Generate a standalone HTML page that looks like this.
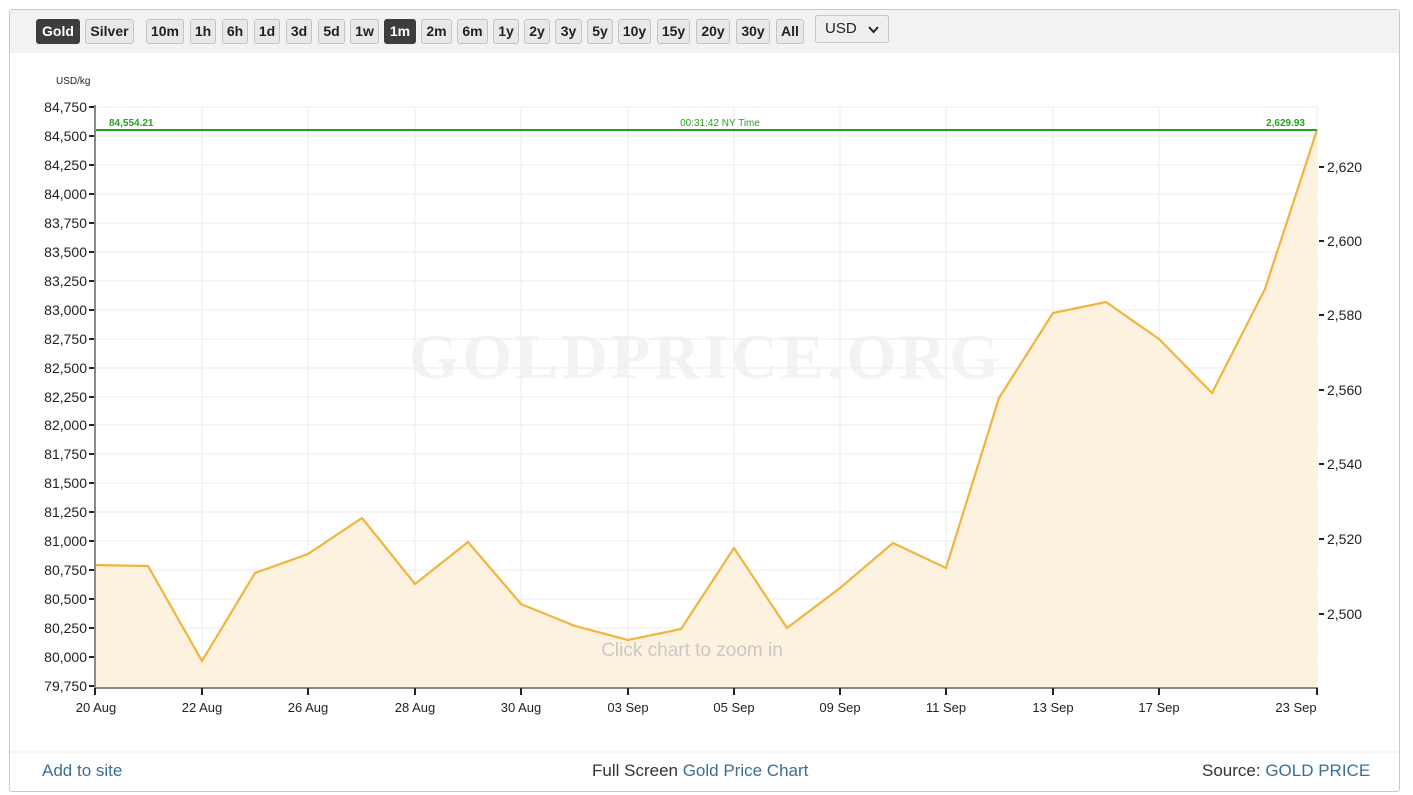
<!DOCTYPE html>
<html><head><meta charset="utf-8"><style>
body{margin:0;width:1413px;height:795px;background:#fff;font-family:"Liberation Sans",sans-serif;position:relative;overflow:hidden}
.box{position:absolute;left:9px;top:9px;width:1391px;height:783px;border:1px solid #c8c8c8;border-radius:3px;box-sizing:border-box}
.bar{position:absolute;left:10px;top:10px;width:1389px;height:43px;background:#f2f2f2}
.b{position:absolute;top:19px;height:25px;box-sizing:border-box;border:1px solid #c4c4c4;border-radius:3px;background:#e8e8e8;font:bold 14px "Liberation Sans",sans-serif;color:#222;text-align:center;line-height:23px}
.b.on{background:#3d3d3d;color:#fff;border-color:#3d3d3d}
.sel{position:absolute;left:815px;top:15px;width:74px;height:28px;box-sizing:border-box;border:1px solid #c8c8c8;border-radius:3px;background:#efefef;font-size:15px;color:#222;line-height:26px;padding-left:9px}
.foot{position:absolute;top:761px;font-size:17px;color:#333}
.foot a{color:#3a6e95;text-decoration:none}
</style></head><body>
<div class="box"></div>
<div class="bar"></div>
<div class="b on" style="left:36px;width:44px">Gold</div>
<div class="b" style="left:85px;width:49px">Silver</div>
<div class="b" style="left:146px;width:38px">10m</div>
<div class="b" style="left:190px;width:26px">1h</div>
<div class="b" style="left:222px;width:26px">6h</div>
<div class="b" style="left:254px;width:26px">1d</div>
<div class="b" style="left:286px;width:26px">3d</div>
<div class="b" style="left:318px;width:27px">5d</div>
<div class="b" style="left:350px;width:29px">1w</div>
<div class="b on" style="left:384px;width:32px">1m</div>
<div class="b" style="left:421px;width:31px">2m</div>
<div class="b" style="left:457px;width:31px">6m</div>
<div class="b" style="left:493px;width:26px">1y</div>
<div class="b" style="left:524px;width:26px">2y</div>
<div class="b" style="left:555px;width:27px">3y</div>
<div class="b" style="left:587px;width:26px">5y</div>
<div class="b" style="left:618px;width:33px">10y</div>
<div class="b" style="left:657px;width:33px">15y</div>
<div class="b" style="left:696px;width:34px">20y</div>
<div class="b" style="left:736px;width:34px">30y</div>
<div class="b" style="left:776px;width:28px">All</div>
<div class="sel">USD <svg style="position:absolute;right:9px;top:10px" width="11" height="8"><path d="M1 1L5.5 6L10 1" fill="none" stroke="#222" stroke-width="2"/></svg></div>
<svg style="position:absolute;left:0;top:0" width="1413" height="795" font-family="Liberation Sans, sans-serif">
<text x="409" y="378" font-family="Liberation Serif, serif" font-weight="bold" font-size="64" fill="#f3f3f3" textLength="590">GOLDPRICE.ORG</text>
<g stroke="#ebebeb" stroke-width="1">
<path d="M95 107H1317M95 136H1317M95 165H1317M95 194H1317M95 223H1317M95 252H1317M95 281H1317M95 310H1317M95 339H1317M95 368H1317M95 397H1317M95 425H1317M95 454H1317M95 483H1317M95 512H1317M95 541H1317M95 570H1317M95 599H1317M95 628H1317M95 657H1317"/>
<path d="M202 107V686M308 107V686M415 107V686M521 107V686M628 107V686M734 107V686M840 107V686M946 107V686M1053 107V686M1159 107V686M1317 107V686"/>
</g>
<path d="M95 565L148 566L202 661L255 573L308 554L362 518L415 584L468 542L521 604L575 626L628 640L681 629L734 548L787 628L840 588L893 543L946 568L999 398L1053 313L1106 302L1159 339L1212 393L1265 289L1317 130L1317 687L95 687Z" fill="#fdf0dc" opacity="0.9"/>
<path d="M95 565L148 566L202 661L255 573L308 554L362 518L415 584L468 542L521 604L575 626L628 640L681 629L734 548L787 628L840 588L893 543L946 568L999 398L1053 313L1106 302L1159 339L1212 393L1265 289L1317 130" fill="none" stroke="#f0b53c" stroke-width="2.2"/>
<line x1="95" y1="130" x2="1317" y2="130" stroke="#22a322" stroke-width="2"/>
<g fill="#22a322" font-size="10" font-weight="bold"><text x="109" y="126">84,554.21</text><text x="1305" y="126" text-anchor="end">2,629.93</text><text x="720" y="126" text-anchor="middle" font-weight="normal">00:31:42 NY Time</text></g>
<text x="56" y="84" font-size="10" fill="#222">USD/kg</text>
<text x="692" y="656" font-size="19" fill="#c8c8c8" text-anchor="middle">Click chart to zoom in</text>
<path d="M95 105V688H1318V688" fill="none" stroke="#888" stroke-width="2"/>
<g stroke="#222" stroke-width="2"><path d="M89 107H94M89 136H94M89 165H94M89 194H94M89 223H94M89 252H94M89 281H94M89 310H94M89 339H94M89 368H94M89 397H94M89 425H94M89 454H94M89 483H94M89 512H94M89 541H94M89 570H94M89 599H94M89 628H94M89 657H94M89 686H94"/>
<path d="M95 688V695M202 688V695M308 688V695M415 688V695M521 688V695M628 688V695M734 688V695M840 688V695M946 688V695M1053 688V695M1159 688V695M1317 688V695"/>
<path d="M1319 167H1324M1319 241H1324M1319 315H1324M1319 390H1324M1319 464H1324M1319 539H1324M1319 614H1324"/></g>
<g font-size="14" fill="#222" text-anchor="end">
<text x="87" y="112">84,750</text><text x="87" y="141">84,500</text><text x="87" y="170">84,250</text><text x="87" y="199">84,000</text><text x="87" y="228">83,750</text><text x="87" y="257">83,500</text><text x="87" y="286">83,250</text><text x="87" y="315">83,000</text><text x="87" y="344">82,750</text><text x="87" y="373">82,500</text><text x="87" y="402">82,250</text><text x="87" y="430">82,000</text><text x="87" y="459">81,750</text><text x="87" y="488">81,500</text><text x="87" y="517">81,250</text><text x="87" y="546">81,000</text><text x="87" y="575">80,750</text><text x="87" y="604">80,500</text><text x="87" y="633">80,250</text><text x="87" y="662">80,000</text><text x="87" y="691">79,750</text></g>
<g font-size="14" fill="#222"><text x="1327" y="172">2,620</text><text x="1327" y="246">2,600</text><text x="1327" y="320">2,580</text><text x="1327" y="395">2,560</text><text x="1327" y="469">2,540</text><text x="1327" y="544">2,520</text><text x="1327" y="619">2,500</text></g>
<g font-size="13" fill="#222" text-anchor="middle"><text x="96" y="712">20 Aug</text><text x="202" y="712">22 Aug</text><text x="308" y="712">26 Aug</text><text x="415" y="712">28 Aug</text><text x="521" y="712">30 Aug</text><text x="628" y="712">03 Sep</text><text x="734" y="712">05 Sep</text><text x="840" y="712">09 Sep</text><text x="946" y="712">11 Sep</text><text x="1053" y="712">13 Sep</text><text x="1159" y="712">17 Sep</text><text x="1296" y="712">23 Sep</text></g>
<line x1="10" y1="752" x2="1399" y2="752" stroke="#eee"/>
</svg>
<div class="foot" style="left:42px"><a>Add to site</a></div>
<div class="foot" style="left:592px">Full Screen <a>Gold Price Chart</a></div>
<div class="foot" style="left:1202px">Source: <a>GOLD PRICE</a></div>
</body></html>
